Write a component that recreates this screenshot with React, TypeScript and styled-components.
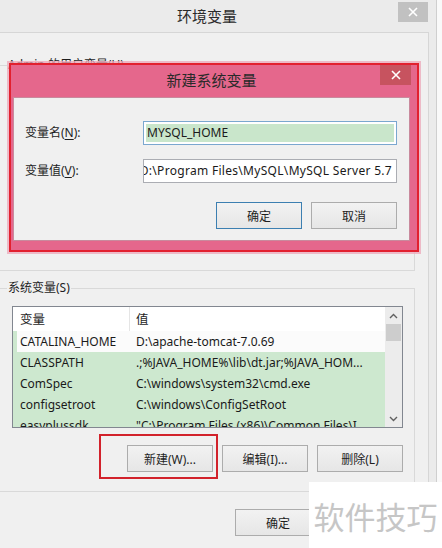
import React from 'react';
import styled, { createGlobalStyle } from 'styled-components';

const FONT = `"Noto Sans", "Noto Sans CJK SC", sans-serif`;
const CJK = `"Noto Sans CJK SC", sans-serif`;

const Global = createGlobalStyle`
  html, body { margin: 0; padding: 0; }
  body {
    background: #f9f9f9;
    font-family: ${FONT};
    font-size: 12px;
    color: #1e1e1e;
    overflow: hidden;
  }
  * { box-sizing: border-box; }
`;

const Stage = styled.div`
  position: relative;
  width: 442px;
  height: 548px;
  overflow: hidden;
`;

const Window = styled.div`
  width: 437px;
  height: 548px;
  background: #ebebeb;
  border-right: 1px solid #cfcfcf;
  display: flex;
  flex-direction: column;
`;

const TitleBar = styled.div`
  height: 32px;
  display: flex;
  align-items: flex-start;
  padding-left: 16px;
  flex-shrink: 0;
`;

const Title = styled.div<{ $size?: number; $lh?: number }>`
  flex: 1;
  text-align: center;
  font-family: ${CJK};
  font-size: ${(p) => p.$size ?? 15}px;
  line-height: ${(p) => p.$lh ?? 32}px;
  color: #2a2a2a;
`;

const CloseBtn = styled.div<{ $bg: string; $w: number; $mt: number; $mr: number }>`
  width: ${(p) => p.$w}px;
  height: 20px;
  margin-top: ${(p) => p.$mt}px;
  margin-right: ${(p) => p.$mr}px;
  background: ${(p) => p.$bg};
  display: flex;
  align-items: center;
  justify-content: center;
  flex-shrink: 0;
`;

const Client = styled.div`
  flex: 1;
  margin-right: 7px;
  background: #f0f0f0;
  border-top: 1px solid #d6d6d6;
  border-right: 1px solid #d6d6d6;
  padding-top: 24px;
  display: flex;
  flex-direction: column;
`;

const Group = styled.fieldset<{ $mt?: number }>`
  margin: ${(p) => p.$mt ?? 0}px 13px 0 -4px;
  border: 1px solid #d9d9d9;
  padding: 10px 10px 19px 10px;
  min-width: 0;
`;

const Legend = styled.legend`
  padding: 0 1px;
  font-size: 12px;
  line-height: 16px;
  color: #1e1e1e;
`;

const ListView = styled.div<{ $h: number }>`
  margin-left: 5px;
  width: 391px;
  height: ${(p) => p.$h}px;
  border: 1px solid #828790;
  background: #fff;
  display: flex;
  overflow: hidden;
`;

const ListMain = styled.div`
  flex: 1;
  display: flex;
  flex-direction: column;
  overflow: hidden;
`;

const HeaderRow = styled.div`
  height: 24px;
  display: flex;
  background: #fff;
  flex-shrink: 0;
`;

const HeaderCell = styled.div<{ $first?: boolean }>`
  flex: ${(p) => (p.$first ? '0 0 117px' : '1')};
  border-right: ${(p) => (p.$first ? '1px solid #e5e5e5' : 'none')};
  padding-left: ${(p) => (p.$first ? 7 : 6)}px;
  font-family: ${CJK};
  font-size: 12.5px;
  line-height: 24px;
  color: #1e1e1e;
`;

const Row = styled.div<{ $plain?: boolean }>`
  height: 21px;
  display: flex;
  flex-shrink: 0;
  background: ${(p) => (p.$plain ? '#fbfbfb' : '#cde8cf')};
  box-shadow: ${(p) => (p.$plain ? 'inset 4px 0 0 #cde8cf' : 'none')};
`;

const Cell = styled.div<{ $first?: boolean }>`
  flex: ${(p) => (p.$first ? '0 0 117px' : '1')};
  padding-left: ${(p) => (p.$first ? 7 : 6)}px;
  font-size: 12px;
  line-height: 21px;
  white-space: nowrap;
  overflow: hidden;
  color: #1a1a1a;
`;

const ScrollBar = styled.div`
  width: 17px;
  flex-shrink: 0;
  background: #ececec;
  display: flex;
  flex-direction: column;
  align-items: center;
`;

const Arrow = styled.div`
  width: 17px;
  height: 17px;
  display: flex;
  align-items: center;
  justify-content: center;
  flex-shrink: 0;
`;

const Thumb = styled.div`
  width: 15px;
  height: 17px;
  background: #cdcdcd;
  flex-shrink: 0;
`;

const Track = styled.div`
  flex: 1;
`;

const ButtonRow = styled.div<{ $mt: number; $gap: number; $pr?: number }>`
  display: flex;
  justify-content: flex-end;
  gap: ${(p) => p.$gap}px;
  margin-top: ${(p) => p.$mt}px;
  padding-right: ${(p) => p.$pr ?? 0}px;
`;

const ListButtons = styled(ButtonRow)`
  margin-left: 5px;
  width: 391px;
`;

const Button = styled.div<{ $default?: boolean }>`
  position: relative;
  width: 86px;
  height: 27px;
  border: 1px solid ${(p) => (p.$default ? '#3c7fb1' : '#acacac')};
  background: linear-gradient(#f2f2f2, #e6e6e6);
  display: flex;
  align-items: center;
  justify-content: center;
  font-size: 12px;
  color: #1e1e1e;
  flex-shrink: 0;
`;

const Annotation = styled.span`
  position: absolute;
  left: -29px;
  top: -12px;
  width: 119px;
  height: 45px;
  border: 2px solid #d2222b;
  pointer-events: none;
`;

const Dialog = styled.div`
  position: absolute;
  left: 9px;
  top: 63px;
  width: 410px;
  height: 189px;
  border: 2px solid #e2202f;
  background: #e5678c;
  box-shadow: 0 0 0 2px rgba(236, 168, 186, 0.75);
  display: flex;
  flex-direction: column;
`;

const DialogTitleBar = styled.div`
  height: 32px;
  display: flex;
  align-items: flex-start;
  padding-left: 32px;
  flex-shrink: 0;
`;

const DialogBody = styled.div`
  flex: 1;
  margin: 0 7px 9px 2px;
  background: #f0f0f0;
  border: 1px solid #c98a9d;
  padding: 23px 12px 0 11px;
  display: flex;
  flex-direction: column;
`;

const FieldRow = styled.div<{ $mt?: number }>`
  display: flex;
  align-items: center;
  margin-top: ${(p) => p.$mt ?? 0}px;
`;

const Label = styled.div`
  width: 118px;
  flex-shrink: 0;
  font-size: 12px;
  line-height: 16px;
  color: #1e1e1e;
  u { text-decoration: underline; text-underline-offset: 2px; }
`;

const TextBox = styled.div<{ $focused?: boolean }>`
  width: 254px;
  height: 24px;
  border: 1px solid ${(p) => (p.$focused ? '#7aa7cf' : '#abadb3')};
  background: #fff;
  padding: 2px;
  display: flex;
  justify-content: ${(p) => (p.$focused ? 'flex-start' : 'flex-end')};
  overflow: hidden;
  white-space: nowrap;
`;

const Selection = styled.div`
  flex: 1;
  background: #c9e6cb;
  padding-left: 1px;
  font-size: 12px;
  line-height: 18px;
  color: #1a1a1a;
`;

const Value = styled.div`
  flex-shrink: 0;
  padding-right: 2px;
  font-size: 12px;
  letter-spacing: 0.3px;
  line-height: 18px;
  color: #1a1a1a;
`;

const Watermark = styled.div`
  position: absolute;
  left: 309px;
  top: 482px;
  width: 133px;
  height: 66px;
  background: #ffffff;
  display: flex;
  align-items: center;
  justify-content: center;
  font-family: ${CJK};
  font-size: 31px;
  color: #c6c6c6;
`;

const Cross = () => (
  <svg width="10" height="10" viewBox="0 0 10 10">
    <path d="M1 1 L9 9 M9 1 L1 9" stroke="#fff" strokeWidth="1.6" />
  </svg>
);

const Chevron = ({ up }: { up?: boolean }) => (
  <svg width="9" height="6" viewBox="0 0 9 6">
    <path d={up ? 'M1 5 L4.5 1.5 L8 5' : 'M1 1 L4.5 4.5 L8 1'} stroke="#606060" strokeWidth="1.4" fill="none" />
  </svg>
);

type Item = [string, string];

const systemVars: Item[] = [
  ['CATALINA_HOME', 'D:\\apache-tomcat-7.0.69'],
  ['CLASSPATH', '.;%JAVA_HOME%\\lib\\dt.jar;%JAVA_HOM...'],
  ['ComSpec', 'C:\\windows\\system32\\cmd.exe'],
  ['configsetroot', 'C:\\windows\\ConfigSetRoot'],
  ['easyplussdk', '"C:\\Program Files (x86)\\Common Files\\I...'],
];

const userVars: Item[] = [
  ['Path', 'C:\\Users\\Admin\\AppData\\Local'],
  ['TEMP', '%USERPROFILE%\\AppData\\Local\\Temp'],
  ['TMP', '%USERPROFILE%\\AppData\\Local\\Temp'],
];

const VarList = ({ items, height, plainFirst }: { items: Item[]; height: number; plainFirst?: boolean }) => (
  <ListView $h={height}>
    <ListMain>
      <HeaderRow>
        <HeaderCell $first>变量</HeaderCell>
        <HeaderCell>值</HeaderCell>
      </HeaderRow>
      {items.map(([k, v], i) => (
        <Row key={k} $plain={plainFirst && i === 0}>
          <Cell $first>{k}</Cell>
          <Cell>{v}</Cell>
        </Row>
      ))}
    </ListMain>
    <ScrollBar>
      <Arrow>
        <Chevron up />
      </Arrow>
      <Thumb />
      <Track />
      <Arrow>
        <Chevron />
      </Arrow>
    </ScrollBar>
  </ListView>
);

export default function App() {
  return (
    <Stage>
      <Global />
      <Window>
        <TitleBar>
          <Title>环境变量</Title>
          <CloseBtn $bg="#c1c1c1" $w={30} $mt={2} $mr={8}>
            <Cross />
          </CloseBtn>
        </TitleBar>
        <Client>
          <Group>
            <Legend>Admin 的用户变量(U)</Legend>
            <VarList items={userVars} height={127} />
            <ListButtons $mt={14} $gap={9}>
              <Button>新建(N)...</Button>
              <Button>编辑(E)...</Button>
              <Button>删除(D)</Button>
            </ListButtons>
          </Group>
          <Group $mt={9}>
            <Legend>系统变量(S)</Legend>
            <VarList items={systemVars} height={122} plainFirst />
            <ListButtons $mt={17} $gap={9}>
              <Button>
                新建(W)...
                <Annotation />
              </Button>
              <Button>编辑(I)...</Button>
              <Button>删除(L)</Button>
            </ListButtons>
          </Group>
          <ButtonRow $mt={17} $gap={9} $pr={12}>
            <Button>确定</Button>
            <Button>取消</Button>
          </ButtonRow>
        </Client>
      </Window>

      <Dialog>
        <DialogTitleBar>
          <Title $lh={30}>新建系统变量</Title>
          <CloseBtn $bg="#c7535f" $w={31} $mt={0} $mr={6}>
            <Cross />
          </CloseBtn>
        </DialogTitleBar>
        <DialogBody>
          <FieldRow>
            <Label>
              变量名(<u>N</u>):
            </Label>
            <TextBox $focused>
              <Selection>MYSQL_HOME</Selection>
            </TextBox>
          </FieldRow>
          <FieldRow $mt={14}>
            <Label>
              变量值(<u>V</u>):
            </Label>
            <TextBox>
              <Value>{'D:\\Program Files\\MySQL\\MySQL Server 5.7'}</Value>
            </TextBox>
          </FieldRow>
          <ButtonRow $mt={19} $gap={9}>
            <Button $default>确定</Button>
            <Button>取消</Button>
          </ButtonRow>
        </DialogBody>
      </Dialog>

      <Watermark>软件技巧</Watermark>
    </Stage>
  );
}
